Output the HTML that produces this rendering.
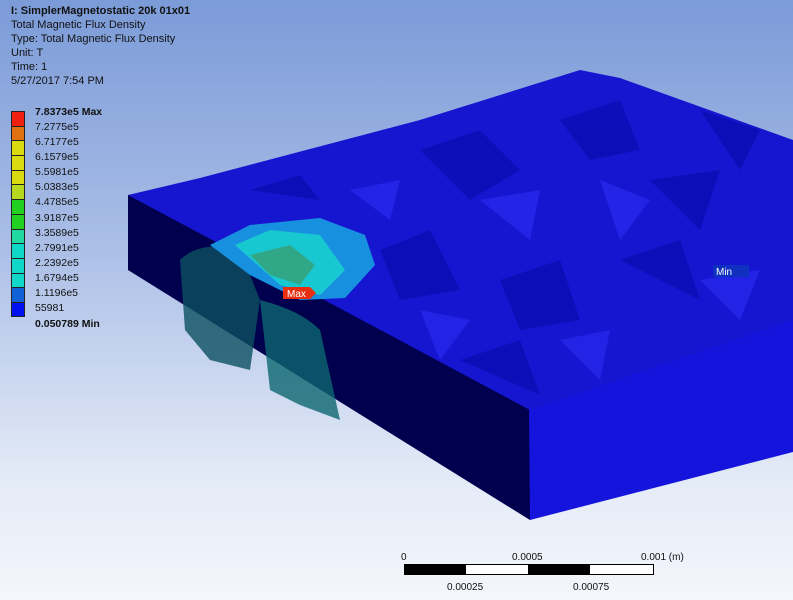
<!DOCTYPE html>
<html><head><style>
body{margin:0;width:793px;height:600px;overflow:hidden;background:linear-gradient(#7b9bd8 0%,#a9bde6 40%,#e4ebf7 80%,#f4f6fb 100%);font-family:"Liberation Sans",sans-serif;position:relative}
.t{position:absolute;left:11px;font-size:11px;color:#111;line-height:14px}
.lg{position:absolute;left:11px;top:111px}
.lg div{width:14px;height:14.7px;border:1px solid #222;border-bottom:none;box-sizing:border-box}
.lb{position:absolute;left:35px;font-size:10.5px;color:#111}
</style></head><body>
<div class="t" style="top:4px"><b>I: SimplerMagnetostatic 20k 01x01</b><br>Total Magnetic Flux Density<br>Type: Total Magnetic Flux Density<br>Unit: T<br>Time: 1<br>5/27/2017 7:54 PM</div>
<div class="lg">
<div style="background:#f02010"></div><div style="background:#e07010"></div><div style="background:#dada10"></div><div style="background:#dada10"></div><div style="background:#dada10"></div><div style="background:#b8d820"></div><div style="background:#22d020"></div><div style="background:#22d020"></div><div style="background:#20d8a0"></div><div style="background:#10d8c8"></div><div style="background:#10d8c8"></div><div style="background:#10d8c8"></div><div style="background:#1060d8"></div><div style="background:#0010f0;border-bottom:1px solid #222"></div>
</div>
<div class="lb" style="top:106px"><b>7.8373e5 Max</b></div>
<div class="lb" style="top:121px">7.2775e5</div><div class="lb" style="top:136px">6.7177e5</div><div class="lb" style="top:151px">6.1579e5</div><div class="lb" style="top:166px">5.5981e5</div><div class="lb" style="top:181px">5.0383e5</div><div class="lb" style="top:196px">4.4785e5</div><div class="lb" style="top:212px">3.9187e5</div><div class="lb" style="top:227px">3.3589e5</div><div class="lb" style="top:242px">2.7991e5</div><div class="lb" style="top:257px">2.2392e5</div><div class="lb" style="top:272px">1.6794e5</div><div class="lb" style="top:287px">1.1196e5</div><div class="lb" style="top:302px">55981</div><div class="lb" style="top:318px"><b>0.050789 Min</b></div>
<svg width="793" height="600" style="position:absolute;left:0;top:0">
<polygon points="128,195 200,178 420,120 580,70 620,78 793,140 793,330 530,415 128,210" fill="#1616d0"/>
<g fill="#0c0cb0" opacity=".7">
<polygon points="420,150 480,130 520,170 470,200"/><polygon points="560,120 620,100 640,150 590,160"/><polygon points="650,180 720,170 700,230"/><polygon points="380,250 430,230 460,290 400,300"/><polygon points="500,280 560,260 580,320 520,330"/><polygon points="620,260 680,240 700,300"/><polygon points="460,360 520,340 540,395"/><polygon points="250,190 300,175 320,200"/><polygon points="700,110 760,130 740,170"/></g>
<g fill="#2a2af0" opacity=".7">
<polygon points="480,200 540,190 530,240"/><polygon points="600,180 650,200 620,240"/><polygon points="350,190 400,180 390,220"/><polygon points="560,340 610,330 600,380"/><polygon points="700,280 760,270 740,320"/><polygon points="420,310 470,320 440,360"/></g>
<polygon points="128,195 530,410 530,520 128,270" fill="#00004e"/>
<polygon points="529,410 793,320 793,452 530,520" fill="#1414dc"/>
<path d="M180,260 Q200,240 240,250 L260,300 L250,370 L210,360 L185,330Z" fill="#0c5060" opacity=".8"/>
<path d="M260,300 Q300,310 320,330 L340,420 L300,405 L270,390Z" fill="#0d6670" opacity=".8"/>
<polygon points="210,245 250,225 320,218 365,235 375,265 345,298 300,300 250,275" fill="#1890e0"/>
<polygon points="235,245 270,230 320,235 345,270 320,295 280,285" fill="#18c8d0"/>
<polygon points="250,255 290,245 315,265 300,285 270,275" fill="#30a888"/>
<polygon points="283,287 310,287 316,293 310,299 283,299" fill="#e83010"/>
<text x="287" y="297" font-size="10" fill="#fff" font-family="Liberation Sans">Max</text>
<rect x="713" y="265" width="36" height="12" fill="#1030c0"/>
<text x="716" y="275" font-size="10" fill="#fff" font-family="Liberation Sans">Min</text>
<rect x="404.5" y="564.5" width="249" height="10" fill="#fff" stroke="#000"/>
<rect x="404" y="564" width="62" height="11" fill="#000"/><rect x="528" y="564" width="62" height="11" fill="#000"/>
<g font-size="10" font-family="Liberation Sans" fill="#111"><text x="401" y="560">0</text><text x="512" y="560">0.0005</text><text x="641" y="560">0.001 (m)</text><text x="447" y="590">0.00025</text><text x="573" y="590">0.00075</text></g>
</svg>
</body></html>
